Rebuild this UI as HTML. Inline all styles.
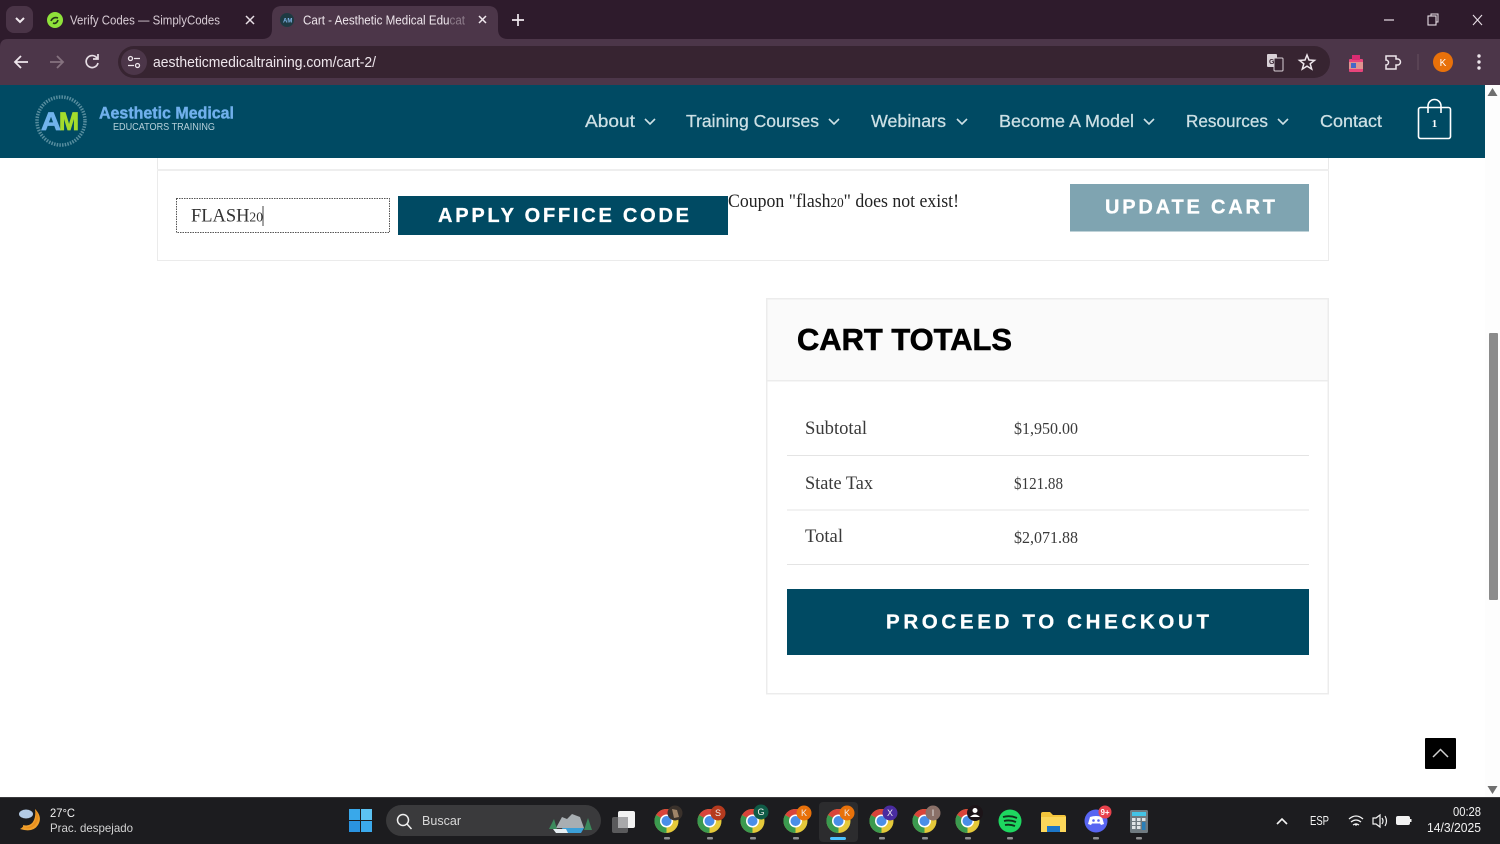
<!DOCTYPE html>
<html lang="en">
<head>
<meta charset="utf-8">
<title>Cart - Aesthetic Medical Educators Training</title>
<style>
html,body{margin:0;padding:0;width:1500px;height:844px;overflow:hidden;background:#fff}
svg{display:block;position:absolute;left:0;top:0}
text{white-space:pre}
.s{font-family:"Liberation Sans",sans-serif}
.f{font-family:"Liberation Serif",serif}
</style>
</head>
<body>
<svg width="1500" height="844" viewBox="0 0 1500 844" xmlns="http://www.w3.org/2000/svg">
<defs>
<g id="chrome">
  <circle cx="0" cy="0" r="12" fill="#e5c93a"/>
  <path d="M0 0L-10.4-6A12 12 0 0 1 10.4-6Z" fill="#d9443a"/>
  <path d="M0 0L-10.4-6A12 12 0 0 0 0 12Z" fill="#3b9a4f"/>
  <circle r="6.500" fill="#fff"/>
  <circle r="5" fill="#4a8ee8"/>
</g>
</defs>

<!-- Browser frame -->
<rect width="1500" height="85" fill="#2e1b2c"/>
<rect x="6" y="6" width="27" height="27" rx="8" fill="#4a3447"/>
<path d="M16 18l4 4 4-4" fill="none" stroke="#f0e8ee" stroke-width="2"/>
<circle cx="55" cy="20" r="8" fill="#8fe23a"/>
<path d="M51 21c1-3 4-4 7-3M53 23c2 1 4 0 5-3" fill="none" stroke="#24351a" stroke-width="1.600"/>
<text class="s" x="70" y="24.500" font-size="13" fill="#d8ccd5" textLength="150" lengthAdjust="spacingAndGlyphs">Verify Codes — SimplyCodes</text>
<path d="M246 16l8 8M254 16l-8 8" stroke="#e8dfe6" stroke-width="1.500"/>
<path d="M0 47V47Q0 39 8 39H1500V85H0Z" fill="#4c3649"/>
<path d="M262 39q10 0 10-10V16q0-10 10-10h206q10 0 10 10v13q0 10 10 10Z" fill="#4c3649"/>
<circle cx="287" cy="20" r="7" fill="#1e3a42"/>
<text class="s" x="283" y="22.500" font-size="6" font-weight="700" fill="#7fb4e8">AM</text>
<text class="s" x="303" y="24.500" font-size="13" fill="#eee6ec" textLength="162" lengthAdjust="spacingAndGlyphs">Cart - Aesthetic Medical Educat</text>
<rect x="450" y="10" width="18" height="20" fill="#4c3649" opacity=".6"/>
<path d="M479 16l7 7M486 16l-7 7" stroke="#f0e8ee" stroke-width="1.500"/>
<path d="M518 14v12M512 20h12" stroke="#f0e8ee" stroke-width="1.700"/>
<path d="M1384 20h10" stroke="#e8dfe6" stroke-width="1.200"/>
<rect x="1428" y="16" width="8" height="9" fill="none" stroke="#e8dfe6" stroke-width="1.100"/>
<path d="M1431 16v-2h7v8h-2" fill="none" stroke="#e8dfe6" stroke-width="1"/>
<path d="M1473 15l9 10M1482 15l-9 10" stroke="#e8dfe6" stroke-width="1.100"/>

<!-- Toolbar -->
<path d="M28 62H16M21 56l-6 6 6 6" fill="none" stroke="#eee6ec" stroke-width="1.800"/>
<path d="M50 62h12M57 56l6 6-6 6" fill="none" stroke="#85727f" stroke-width="1.800"/>
<path d="M97 58a6 6 0 1 0 1 5M98 54v5h-5" fill="none" stroke="#e6dde4" stroke-width="1.700"/>
<rect x="118" y="46" width="1212" height="32" rx="16" fill="#372431"/>
<circle cx="134" cy="62" r="13" fill="#4c3649"/>
<circle cx="130.500" cy="58.500" r="2" fill="none" stroke="#eee6ec" stroke-width="1.300"/>
<path d="M134 58.500h6M128 65.500h6" stroke="#eee6ec" stroke-width="1.300"/>
<circle cx="137.500" cy="65.500" r="2" fill="none" stroke="#eee6ec" stroke-width="1.300"/>
<text class="s" x="153" y="67" font-size="15" fill="#eee6ec" textLength="223" lengthAdjust="spacingAndGlyphs">aestheticmedicaltraining.com/cart-2/</text>
<!-- translate -->
<rect x="1267" y="54" width="10" height="13" rx="1" fill="#d8d0d6"/>
<rect x="1274" y="58" width="9" height="13" rx="1" fill="#372431" stroke="#d8d0d6"/>
<text class="s" x="1269" y="64" font-size="7" font-weight="700" fill="#372431">G</text>
<path d="M1307 55l2 5 5.500.400-4.300 3.400 1.500 5.300-4.700-3-4.700 3 1.500-5.300-4.300-3.400 5.500-.400Z" fill="none" stroke="#eee6ec" stroke-width="1.500"/>
<!-- extension -->
<rect x="1349" y="59" width="14" height="13" rx="1" fill="#e8457c"/>
<rect x="1352" y="55" width="8" height="5" fill="#d92b72"/>
<rect x="1349" y="62" width="14" height="7" fill="#e0938f"/>
<rect x="1351" y="63" width="5" height="5" fill="#4667c8"/>
<path d="M1386 56h10v3h1.500a2.500 2.500 0 0 1 0 6h-1.500v4h-10v-4a2.500 2.500 0 0 0 0-5Z" fill="none" stroke="#eee6ec" stroke-width="1.500"/>
<path d="M1418 54v16" stroke="#66505f"/>
<circle cx="1443" cy="62" r="10" fill="#e8710a"/>
<text class="s" x="1443" y="66" font-size="10" fill="#fff" text-anchor="middle">K</text>
<circle cx="1479" cy="56" r="1.700" fill="#eee6ec"/><circle cx="1479" cy="62" r="1.700" fill="#eee6ec"/><circle cx="1479" cy="68" r="1.700" fill="#eee6ec"/>

<!-- Site header -->
<rect x="0" y="85" width="1485" height="73" fill="#004a63"/>
<circle cx="61" cy="121" r="24" fill="none" stroke="#9fc4cf" stroke-width="3.500" stroke-dasharray="1.500 1.200" opacity=".55"/>
<text class="s" x="41" y="130" font-size="25" font-weight="700" fill="#70b3ec" stroke="#70b3ec" stroke-width=".8" textLength="20" lengthAdjust="spacingAndGlyphs">A</text>
<text class="s" x="59" y="130" font-size="25" font-weight="700" fill="#a4dc2c" stroke="#a4dc2c" stroke-width=".8" textLength="20" lengthAdjust="spacingAndGlyphs">M</text>
<text class="s" x="99" y="118.500" font-size="17" font-weight="700" fill="#70b0ec" stroke="#70b0ec" stroke-width=".4" textLength="135" lengthAdjust="spacingAndGlyphs">Aesthetic Medical</text>
<text class="s" x="113" y="130" font-size="10" fill="#b6d0da" textLength="102" lengthAdjust="spacingAndGlyphs">EDUCATORS TRAINING</text>

<g class="s" font-size="17.500" fill="#cde0e5" stroke="#cde0e5" stroke-width=".25">
<text x="585" y="127" textLength="50" lengthAdjust="spacingAndGlyphs">About</text>
<text x="686" y="127" textLength="133" lengthAdjust="spacingAndGlyphs">Training Courses</text>
<text x="871" y="127" textLength="75" lengthAdjust="spacingAndGlyphs">Webinars</text>
<text x="999" y="127" textLength="135" lengthAdjust="spacingAndGlyphs">Become A Model</text>
<text x="1186" y="127" textLength="82" lengthAdjust="spacingAndGlyphs">Resources</text>
<text x="1320" y="127" textLength="62" lengthAdjust="spacingAndGlyphs">Contact</text>
</g>
<g fill="none" stroke="#cde0e5" stroke-width="1.600">
<path d="M645 119l5 5 5-5"/><path d="M829 119l5 5 5-5"/><path d="M957 119l5 5 5-5"/><path d="M1144 119l5 5 5-5"/><path d="M1278 119l5 5 5-5"/>
</g>
<rect x="1418.500" y="107.500" width="32" height="31" rx="2" fill="none" stroke="#fff" stroke-width="1.600"/>
<path d="M1428 113v-7a6.500 6.500 0 0 1 13 0v7" fill="none" stroke="#fff" stroke-width="1.600"/>
<text class="f" x="1434.500" y="127" font-size="11" font-weight="700" fill="#fff" text-anchor="middle">1</text>

<!-- Scrollbar -->
<rect x="1485" y="85" width="15" height="712" fill="#fdfdfd"/>
<rect x="1489" y="333" width="9" height="267" rx="1" fill="#8b8b8b"/>
<path d="M1492.500 88l5 8h-10Z" fill="#6f6f6f"/>
<path d="M1487.500 786h10l-5 8Z" fill="#6f6f6f"/>

<!-- Coupon row -->
<rect x="157" y="158" width="1" height="12" fill="#e9e9e9"/>
<rect x="1328" y="158" width="1" height="12" fill="#e9e9e9"/>
<rect x="157.500" y="169.500" width="1171" height="91" fill="#fff" stroke="#ebebeb" stroke-width="1"/>
<rect x="157" y="169" width="1172" height="2" fill="#eeeeee"/>
<rect x="176.500" y="198.500" width="213" height="34" fill="#fff" stroke="#555" stroke-width="1" stroke-dasharray="1.500 1"/>
<text class="f" x="191" y="221.500" font-size="19" fill="#333" textLength="72" lengthAdjust="spacingAndGlyphs">FLASH<tspan font-size="14">20</tspan></text>
<rect x="262.500" y="206" width="1" height="20" fill="#444"/>
<rect x="398" y="196" width="330" height="39" fill="#004a63"/>
<text class="s" x="438" y="222" font-size="20" font-weight="700" fill="#fff" stroke="#fff" stroke-width=".3" textLength="251">APPLY OFFICE CODE</text>
<text class="f" x="728" y="207" font-size="19" fill="#222" textLength="231" lengthAdjust="spacingAndGlyphs">Coupon "flash<tspan font-size="14">20</tspan>" does not exist!</text>
<rect x="1070" y="184" width="239" height="47.500" fill="#7fa4b1"/>
<text class="s" x="1105" y="213.500" font-size="20" font-weight="700" fill="#fff" stroke="#fff" stroke-width=".3" textLength="170">UPDATE CART</text>

<!-- Cart totals -->
<rect x="766.750" y="298.750" width="561.500" height="395" fill="#fff" stroke="#ececec" stroke-width="1.500"/>
<rect x="767.500" y="299.500" width="560" height="81" fill="#fafafa"/>
<rect x="767" y="380" width="561" height="1.500" fill="#ececec"/>
<text class="s" x="797" y="350" font-size="31" font-weight="700" fill="#000" textLength="215" lengthAdjust="spacingAndGlyphs" stroke="#000" stroke-width=".6">CART TOTALS</text>
<g class="f" font-size="19" fill="#3a3a3a">
<text x="805" y="434" textLength="62" lengthAdjust="spacingAndGlyphs">Subtotal</text>
<text x="1014" y="434" font-size="16.500" textLength="64" lengthAdjust="spacingAndGlyphs">$1,950.00</text>
<text x="805" y="489" textLength="68" lengthAdjust="spacingAndGlyphs">State Tax</text>
<text x="1014" y="489" font-size="16.500" textLength="49" lengthAdjust="spacingAndGlyphs">$121.88</text>
<text x="805" y="542" textLength="38" lengthAdjust="spacingAndGlyphs">Total</text>
<text x="1014" y="543" font-size="16.500" textLength="64" lengthAdjust="spacingAndGlyphs">$2,071.88</text>
</g>
<rect x="787" y="455" width="522" height="1" fill="#e4e4e4"/>
<rect x="787" y="509.500" width="522" height="1" fill="#e4e4e4"/>
<rect x="787" y="564" width="522" height="1" fill="#e4e4e4"/>
<rect x="787" y="589" width="522" height="66" fill="#004a63"/>
<text class="s" x="886" y="628.500" font-size="20.500" font-weight="700" fill="#fff" stroke="#fff" stroke-width=".3" textLength="323">PROCEED TO CHECKOUT</text>

<!-- Back to top -->
<rect x="1425" y="738" width="31" height="31" rx="1" fill="#000"/>
<path d="M1433 757l7.500-7.500 7.500 7.500" fill="none" stroke="#d0d0d0" stroke-width="1.500"/>

<!-- Taskbar -->
<rect x="0" y="797" width="1500" height="47" fill="#1c1c1f"/>
<rect x="0" y="797" width="1500" height="1" fill="#3a3a3c"/>
<path d="M35 809q8 8 3 16-5 8-18 4 4-2 3-4 8 2 11-5 2-5 1-11Z" fill="#f0a02c"/>
<path d="M35 809q3 10-2 15-5 5-12 3 10 4 15-3 5-7-1-15Z" fill="#e98f1e"/>
<ellipse cx="26" cy="814" rx="7" ry="4.500" fill="#b4cbe6"/>
<text class="s" x="50" y="817" font-size="12" fill="#f2f2f2" textLength="25" lengthAdjust="spacingAndGlyphs">27°C</text>
<text class="s" x="50" y="832" font-size="12" fill="#d2d2d2" textLength="83" lengthAdjust="spacingAndGlyphs">Prac. despejado</text>

<rect x="349" y="809" width="11" height="11" fill="#39a8ea"/><rect x="361" y="809" width="11" height="11" fill="#5cc3f3"/>
<rect x="349" y="821" width="11" height="11" fill="#2a93e0"/><rect x="361" y="821" width="11" height="11" fill="#3ba9ec"/>
<rect x="386" y="805" width="215" height="31" rx="15.500" fill="#3a3a3c"/>
<circle cx="403" cy="820" r="5.500" fill="none" stroke="#f0f0f0" stroke-width="1.500"/>
<path d="M407 824l4.500 5" stroke="#f0f0f0" stroke-width="1.500"/>
<text class="s" x="422" y="825" font-size="13" fill="#d8d8d8" textLength="39" lengthAdjust="spacingAndGlyphs">Buscar</text>
<path d="M556 828l6-11 5 2 5-5 8 3 4 11Z" fill="#a8aeb2"/>
<path d="M549 829l5-10 3 10ZM584 830l4-12 4 12Z" fill="#3c8a5c"/>
<path d="M562 828h22l-3 5h-17Z" fill="#3ca0d8"/>
<path d="M553 829h13l2 4h-12Z" fill="#e6eef2"/>

<rect x="612" y="817" width="16" height="16" rx="2" fill="#5a5a5c"/>
<rect x="618" y="811" width="17" height="17" rx="2" fill="#f2f2f2"/>
<rect x="618" y="817" width="10" height="11" fill="#a8a8aa"/>

<rect x="819" y="802" width="39" height="40" rx="4" fill="#2c2c2e"/>

<use href="#chrome" x="666.500" y="821"/><use href="#chrome" x="709.500" y="821"/><use href="#chrome" x="752.500" y="821"/><use href="#chrome" x="795.500" y="821"/><use href="#chrome" x="838.500" y="821"/><use href="#chrome" x="881.500" y="821"/><use href="#chrome" x="924.500" y="821"/><use href="#chrome" x="967.500" y="821"/>

<circle cx="675" cy="813" r="7.500" fill="#3a312b"/><path d="M672 809l5 1 2 7-5 1Z" fill="#a08468"/>
<g class="s" font-size="9" text-anchor="middle" fill="#eee">
<circle cx="718" cy="813" r="7.500" fill="#b53a1e"/><text x="718" y="816">S</text>
<circle cx="761" cy="812" r="7.500" fill="#0f5b46"/><text x="761" y="815">G</text>
<circle cx="804" cy="813" r="7.500" fill="#e8710a"/><text x="804" y="816">K</text>
<circle cx="847" cy="813" r="7.500" fill="#e8710a"/><text x="847" y="816">K</text>
<circle cx="890" cy="813" r="7.500" fill="#4a2ca0"/><text x="890" y="816">X</text>
<circle cx="933" cy="813" r="7.500" fill="#8a7068"/><text x="933" y="816">I</text>
</g>
<circle cx="975" cy="813" r="8" fill="#1c1418"/>
<circle cx="975" cy="810.500" r="2.500" fill="#fff"/><path d="M970 817q5-5 10 0Z" fill="#fff"/>

<circle cx="1010" cy="821" r="11.500" fill="#1ed760"/>
<g fill="none" stroke="#10301c" stroke-width="1.800">
<path d="M1003 817q7-2 14 1"/><path d="M1004 821q6-1.500 12 1"/><path d="M1005 825q5-1 10 1"/>
</g>
<path d="M1041 814a2 2 0 0 1 2-2h7l3 3h11a2 2 0 0 1 2 2v15h-25Z" fill="#f4c53c"/>
<rect x="1041" y="817" width="25" height="15" fill="#fcd75a"/>
<rect x="1047" y="826" width="13" height="6" fill="#1c76c8"/>
<circle cx="1096" cy="821" r="11.500" fill="#5865f2"/>
<path d="M1090 817q6-2 12 0l2 7-3 1-1-1.500h-8l-1 1.500-3-1Z" fill="#fff"/>
<circle cx="1093.500" cy="820.500" r="1.300" fill="#5865f2"/><circle cx="1098.500" cy="820.500" r="1.300" fill="#5865f2"/>
<circle cx="1105" cy="812" r="6.500" fill="#e8424c"/>
<text class="s" x="1105" y="815" font-size="8" font-weight="700" fill="#fff" text-anchor="middle">9+</text>
<rect x="1130" y="810" width="18" height="23" rx="1.500" fill="#6f7a80"/>
<rect x="1132" y="812" width="14" height="4" fill="#43c4e6"/>
<g fill="#dfe4e6">
<rect x="1132" y="818" width="3.500" height="3"/><rect x="1137" y="818" width="3.500" height="3"/><rect x="1142" y="818" width="3.500" height="3"/>
<rect x="1132" y="822" width="3.500" height="3"/><rect x="1137" y="822" width="3.500" height="3"/>
<rect x="1132" y="826" width="3.500" height="3"/><rect x="1137" y="826" width="3.500" height="3"/>
</g>
<rect x="1142" y="822" width="3.500" height="8" fill="#2a7fb8"/>

<g fill="#8e8e90">
<rect x="664" y="837" width="6" height="2.500" rx="1"/><rect x="707" y="837" width="6" height="2.500" rx="1"/><rect x="750" y="837" width="6" height="2.500" rx="1"/><rect x="793" y="837" width="6" height="2.500" rx="1"/><rect x="879" y="837" width="6" height="2.500" rx="1"/><rect x="922" y="837" width="6" height="2.500" rx="1"/><rect x="965" y="837" width="6" height="2.500" rx="1"/><rect x="1007" y="837" width="6" height="2.500" rx="1"/><rect x="1093" y="837" width="6" height="2.500" rx="1"/><rect x="1136" y="837" width="6" height="2.500" rx="1"/>
</g>
<rect x="830" y="837" width="16" height="3" rx="1.500" fill="#4cc2ff"/>

<!-- Tray -->
<path d="M1277 824l5-5 5 5" fill="none" stroke="#f2f2f2" stroke-width="1.600"/>
<text class="s" x="1310" y="825" font-size="13" fill="#f2f2f2" textLength="19" lengthAdjust="spacingAndGlyphs">ESP</text>
<g fill="none" stroke="#f2f2f2" stroke-width="1.300">
<path d="M1349 819q7-6 14 0M1351 822q5-4 10 0M1353 825q3-2 6 0"/>
</g>
<circle cx="1356" cy="824.500" r="1.200" fill="#f2f2f2"/>
<path d="M1373 818h3l4-3v12l-4-3h-3Z" fill="none" stroke="#f2f2f2" stroke-width="1.200"/>
<path d="M1382 818q2 3 0 6M1385 816q3 5 0 10" fill="none" stroke="#f2f2f2" stroke-width="1.200"/>
<rect x="1396" y="816" width="14" height="9" rx="2" fill="#f2f2f2"/>
<rect x="1410" y="819" width="1.500" height="3" fill="#f2f2f2"/>
<text class="s" x="1481" y="816" font-size="12.500" fill="#f2f2f2" text-anchor="end" textLength="28" lengthAdjust="spacingAndGlyphs">00:28</text>
<text class="s" x="1481" y="832" font-size="12.500" fill="#f2f2f2" text-anchor="end" textLength="54" lengthAdjust="spacingAndGlyphs">14/3/2025</text>
</svg>
</body>
</html>
